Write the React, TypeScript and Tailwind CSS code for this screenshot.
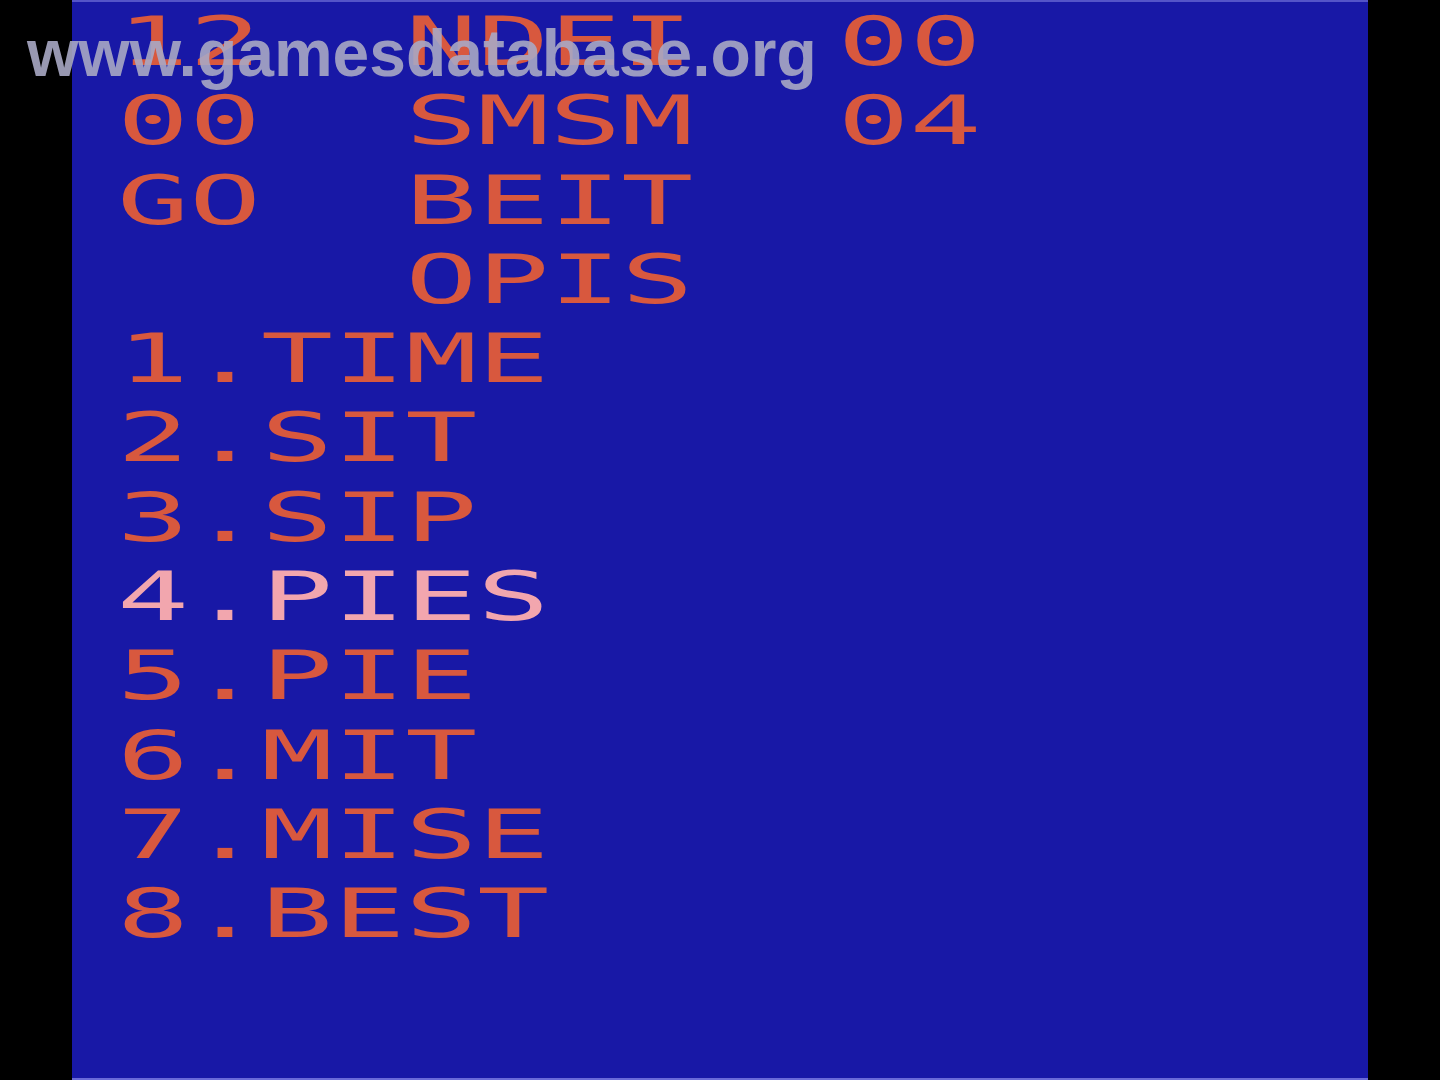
const rows: { text: string; hot?: boolean }[] = [
  { text: '12  NDEI  00' },
  { text: '00  SMSM  04' },
  { text: 'GO  BEIT' },
  { text: '    OPIS' },
  { text: '1.TIME' },
  { text: '2.SIT' },
  { text: '3.SIP' },
  { text: '4.PIES', hot: true },
  { text: '5.PIE' },
  { text: '6.MIT' },
  { text: '7.MISE' },
  { text: '8.BEST' },
];

export default function App() {
  return (
    <div className="relative flex h-[1080px] w-[1440px] overflow-hidden bg-black">
      <div className="w-[72px] shrink-0 bg-black" />
      <div className="flex-1 border-t-2 border-b-2 border-t-[#5454c8] border-b-[#6a6ad8] bg-[#1818a6] pl-[45px]">
        <div className="font-['DejaVu_Sans_Mono',monospace] text-[68px] leading-[79.3px]">
          {rows.map((r, i) => (
            <div
              key={i}
              className={`origin-left scale-x-[1.76] whitespace-pre ${r.hot ? 'text-[#f2a6ae]' : 'text-[#d8583e]'}`}
            >
              {r.text}
            </div>
          ))}
        </div>
      </div>
      <div className="w-[72px] shrink-0 bg-black" />

      {/* watermark */}
      <div className="absolute left-[27px] top-[20px] font-['Liberation_Sans',Arial,sans-serif] text-[66px] font-bold leading-none text-[#a8a8c4]/90">
        www.gamesdatabase.org
      </div>
    </div>
  );
}
